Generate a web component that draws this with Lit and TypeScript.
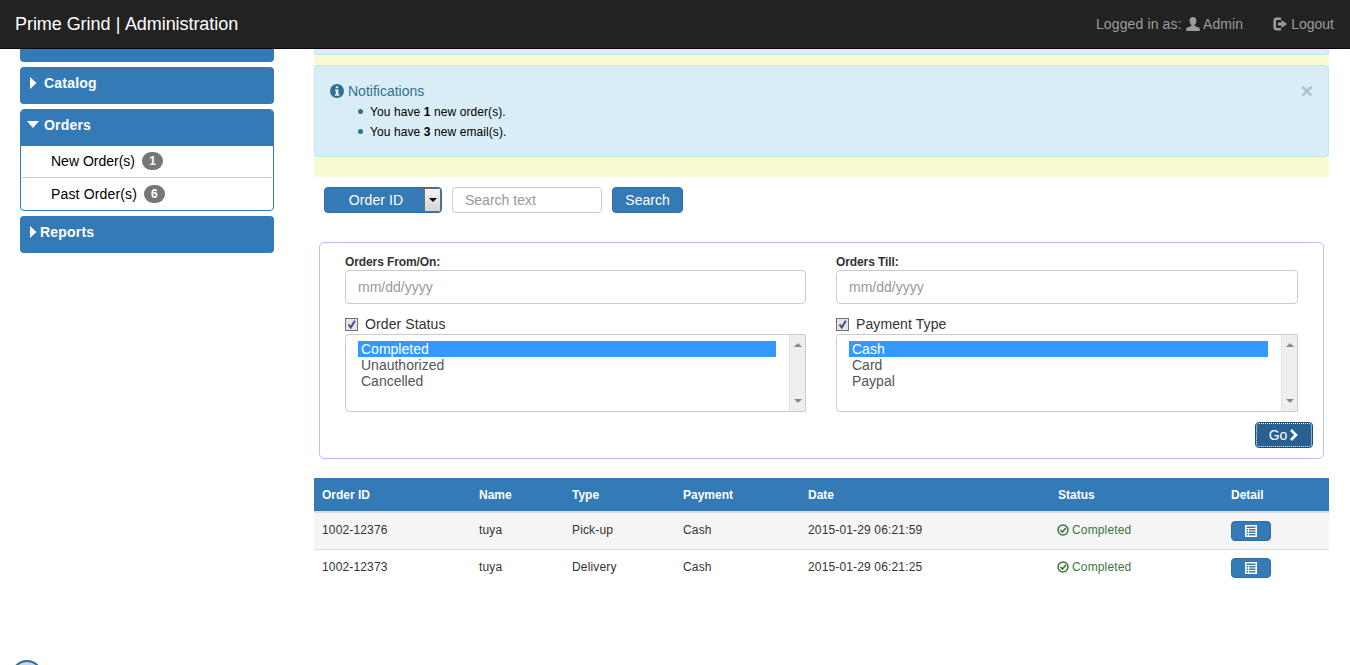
import { LitElement, html, css, svg } from "lit";
import { customElement } from "lit/decorators.js";

const triRight = html`<svg class="tri" viewBox="0 0 8 12" width="8" height="12"><path d="M0 0L6.5 6L0 12Z" fill="#fff"/></svg>`;
const triDown = html`<svg class="tridown" viewBox="0 0 12 8" width="12" height="8"><path d="M0 0H12L6 7Z" fill="#fff"/></svg>`;
const okCircle = html`<svg class="ok" viewBox="0 0 12 12" width="12" height="12"><circle cx="6" cy="6" r="5" fill="none" stroke="#3c763d" stroke-width="1.5"/><path d="M3.4 5.9L5.4 8L8.8 4" fill="none" stroke="#3c763d" stroke-width="1.6"/></svg>`;
const listAlt = html`<svg viewBox="0 0 14 14" width="14" height="14"><path fill="#fff" fill-rule="evenodd" d="M1 1H13V13H1ZM2.5 2.5V4H11.5V2.5ZM2.5 5V6.5H4V5ZM5 5V6.5H11.5V5ZM2.5 7.5V9H4V7.5ZM5 7.5V9H11.5V7.5ZM2.5 10V11.5H4V10ZM5 10V11.5H11.5V10Z"/></svg>`;
const scrollUp = svg`<path d="M3 5L7 1L11 5Z" fill="#8a8a8a"/>`;
const scrollDown = svg`<path d="M3 1L7 5L11 1Z" fill="#8a8a8a"/>`;

function listbox(items: string[]) {
  return html`<div class="listbox">
    <div class="options">
      ${items.map((t, i) => html`<div class="opt ${i === 0 ? "sel" : ""}">${t}</div>`)}
    </div>
    <div class="scroll">
      <svg viewBox="0 0 14 6" width="14" height="6">${scrollUp}</svg>
      <svg viewBox="0 0 14 6" width="14" height="6">${scrollDown}</svg>
    </div>
  </div>`;
}

const check = html`<span class="cb"><svg viewBox="0 0 11 11" width="11" height="11"><path d="M2.5 5.5L4.8 8.5L8.8 1.8" fill="none" stroke="#3d4f9e" stroke-width="2"/></svg></span>`;

const rows = [
  ["1002-12376", "tuya", "Pick-up", "Cash", "2015-01-29 06:21:59"],
  ["1002-12373", "tuya", "Delivery", "Cash", "2015-01-29 06:21:25"],
];

@customElement("app-root")
export class AppRoot extends LitElement {
  static styles = css`
    :host { display: block; height: 665px; overflow: hidden; position: relative; font-family: "Liberation Sans", Arial, sans-serif; font-size: 14px; color: #333; background: #fff; }
    * { box-sizing: border-box; }
    .nav { height: 49px; background: #222; border-bottom: 1px solid #080808; display: flex; align-items: center; justify-content: space-between; padding: 0 16px 0 15px; }
    .brand { font-size: 18px; color: #fff; letter-spacing: -0.06px; }
    .brand .bar { margin: 0 .5px; }
    .navr { display: flex; color: #9d9d9d; font-size: 14px; align-items: center; }
    .navr svg { vertical-align: -2px; }
    .logged { letter-spacing: .13px; }
    .logout { margin-left: 30px; }
    .body { display: flex; align-items: flex-start; }
    .side { width: 254px; margin-left: 20px; display: flex; flex-direction: column; gap: 5px; }
    .panel { background: #337ab7; border-radius: 4px; height: 37px; color: #fff; font-weight: bold; display: flex; align-items: center; gap: 6px; padding: 0 0 6px 10px; font-size: 14px; letter-spacing: .2px; }
    .stub { height: 13px; border-radius: 0 0 4px 4px; padding: 0; }
    .reports { gap: 2px; }
    .orders { border: 1px solid #337ab7; border-radius: 4px; height: 102px; overflow: hidden; }
    .orders .panel { margin: -1px -1px 0; border-radius: 4px 4px 0 0; padding-left: 7px; gap: 5px; }
    .orders .item { height: 31px; padding: 0 0 2px 30px; display: flex; align-items: center; color: #000; font-size: 14px; }
    .orders .past { height: 34px; border-top: 1px solid #ccc; letter-spacing: .15px; margin: 0 1px; padding-left: 29px; }
    .badge { background: #777; color: #fff; font-size: 12px; font-weight: bold; border-radius: 10px; width: 21px; height: 18px; margin-left: 7px; display: flex; align-items: center; justify-content: center; }
    .main { width: 1015px; margin-left: 40px; }
    .yellow { background: #fafad2; height: 128px; padding-bottom: 20px; display: flex; flex-direction: column; }
    .alertstub { height: 6px; background: #d9edf7; border: 1px solid #bce8f1; border-top: 0; border-radius: 0 0 4px 4px; }
    .alert { margin-top: 10px; height: 92px; background: #d9edf7; border: 1px solid #bce8f1; border-radius: 4px; padding: 15px; position: relative; }
    .alert .title { color: #31708f; font-size: 14px; display: flex; align-items: center; gap: 4px; line-height: 20px; }
    .alert ul { margin: 1px 0 0; padding: 0 0 0 40px; color: #000; font-size: 12px; list-style: none; letter-spacing: .09px; }
    .alert li { height: 20px; line-height: 20px; position: relative; }
    .alert li::before { content: ""; position: absolute; left: -12px; top: 7px; width: 5px; height: 5px; border-radius: 50%; background: #31708f; }
    .close { position: absolute; right: 15px; top: 15px; font-size: 21px; line-height: 20px; font-weight: bold; color: #000; opacity: .2; }
    .search { display: flex; margin: 10px 0 0 10px; height: 26px; align-items: stretch; }
    .sel-btn { width: 118px; background: #337ab7; border: 1px solid #2e6da4; border-radius: 4px; color: #fff; display: flex; font-size: 14px; overflow: hidden; }
    .sel-btn span { flex: 1; display: flex; align-items: center; justify-content: center; padding-left: 3px; letter-spacing: .1px; }
    .sel-btn i { width: 17px; background: linear-gradient(#f4f4f4, #d4d4d4); border: 1px solid #707070; display: flex; align-items: center; justify-content: center; }
    .sel-btn i::after { content: ""; border: 4px solid transparent; border-top-color: #000; border-bottom: 0; }
    .stext { margin-left: 10px; width: 150px; border: 1px solid #ccc; border-radius: 4px; padding-left: 12px; display: flex; align-items: center; color: #999; font-size: 14px; }
    .sbtn { margin-left: 10px; width: 71px; background: #337ab7; border: 1px solid #2e6da4; border-radius: 4px; color: #fff; display: flex; align-items: center; justify-content: center; font-size: 14px; }
    .filter { margin: 29px 5px 0; height: 217px; border: 1px solid #b0c4f8; border-radius: 5px; padding: 10px 25px 0; position: relative; }
    .cols { display: grid; grid-template-columns: 461px 462px; column-gap: 30px; }
    .lbl { font-size: 12px; font-weight: bold; line-height: 17px; color: #333; letter-spacing: -.1px; padding-top: 1px; height: 17px; }
    .input { height: 34px; border: 1px solid #ccc; border-radius: 4px; padding-left: 12px; display: flex; align-items: center; color: #999; font-size: 14px; }
    .chk { display: flex; align-items: center; height: 20px; margin-top: 10px; gap: 7px; font-size: 14px; letter-spacing: .1px; }
    .cb { width: 13px; height: 13px; border: 1px solid #707070; background: #e4e4e4; display: flex; align-items: center; justify-content: center; }
    .listbox { height: 78px; border: 1px solid #ccc; border-radius: 4px 0 0 4px; display: flex; justify-content: space-between; }
    .options { padding: 6px 13px 0 12px; flex: 1; }
    .opt { height: 16px; line-height: 16px; padding-left: 3px; font-size: 14px; color: #555; }
    .opt.sel { background: #3399ff; color: #fff; }
    .scroll { width: 16px; background: #eee; border-left: 1px solid #e4e4e4; display: flex; flex-direction: column; justify-content: space-between; padding: 7px 0; align-items: center; }
    .go { position: absolute; right: 10px; bottom: 10px; width: 58px; height: 26px; background: #286090; border: 1px solid #204d74; border-radius: 4px; color: #fff; font-size: 14px; display: flex; align-items: center; justify-content: center; gap: 2px; outline: 1px dotted #fff; outline-offset: -2px; }
    .table { margin-top: 19px; font-size: 12px; }
    .tr { display: grid; grid-template-columns: 157px 93px 111px 125px 250px 173px 106px; align-items: center; }
    .tr > div { padding-left: 8px; }
    .th { background: #337ab7; color: #fff; font-weight: bold; height: 33px; }
    .td { height: 37px; border-top: 1px solid #ddd; color: #333; letter-spacing: .15px; }
    .td.first { border-top: 2px solid #ddd; height: 38px; background: #f5f5f5; }
    .tr > .cell { padding-bottom: 3px; }
    .tr > .status { color: #3c763d; display: flex; align-items: center; gap: 3px; padding-left: 7px; }
    .dbtn { width: 40px; height: 20px; background: #337ab7; border: 1px solid #2e6da4; border-radius: 4px; display: flex; align-items: center; justify-content: center; }
    .logo { position: absolute; left: 11px; top: 660px; }
  `;

  render() {
    return html`
      <div class="nav">
        <div class="brand">Prime Grind <span class="bar">|</span> Administration</div>
        <div class="navr">
          <span class="logged">Logged in as:
            <svg viewBox="0 0 14 14" width="14" height="14"><path fill="#9d9d9d" d="M7 0C4.8 0 3.6 1.6 3.6 3.7C3.6 5.4 4.4 7 5.3 7.8V9L0.3 11V14H13.7V11L8.7 9V7.8C9.6 7 10.4 5.4 10.4 3.7C10.4 1.6 9.2 0 7 0Z"/></svg>
            Admin</span>
          <span class="logout">
            <svg viewBox="0 0 14 14" width="14" height="14"><path fill="#9d9d9d" d="M0.5 3.5C0.5 1.8 1.8 0.5 3.5 0.5H8V3H4C3.4 3 3 3.4 3 4V10C3 10.6 3.4 11 4 11H8V13.5H3.5C1.8 13.5 0.5 12.2 0.5 10.5ZM8.5 3L14 7L8.5 11V8.5H5V5.5H8.5Z"/></svg>
            Logout</span>
        </div>
      </div>
      <div class="body">
        <div class="side">
          <div class="panel stub"></div>
          <div class="panel">${triRight}<span>Catalog</span></div>
          <div class="orders">
            <div class="panel">${triDown}<span>Orders</span></div>
            <div class="item">New Order(s)<span class="badge">1</span></div>
            <div class="item past">Past Order(s)<span class="badge">6</span></div>
          </div>
          <div class="panel reports">${triRight}<span>Reports</span></div>
        </div>
        <div class="main">
          <div class="yellow">
            <div class="alertstub"></div>
            <div class="alert">
              <div class="close">×</div>
              <div class="title">
                <svg viewBox="0 0 14 14" width="14" height="14"><path fill="#31708f" fill-rule="evenodd" d="M7 0A7 7 0 1 0 7 14A7 7 0 1 0 7 0ZM5.8 2.2H8.2V4.2H5.8ZM5 5.5H8.4V10.2H9.4V11.8H4.8V10.2H5.8V7H5Z"/></svg>
                Notifications
              </div>
              <ul>
                <li>You have <b>1</b> new order(s).</li>
                <li>You have <b>3</b> new email(s).</li>
              </ul>
            </div>
          </div>
          <div class="search">
            <div class="sel-btn"><span>Order ID</span><i></i></div>
            <div class="stext">Search text</div>
            <div class="sbtn">Search</div>
          </div>
          <div class="filter">
            <div class="cols">
              <div>
                <div class="lbl">Orders From/On:</div>
                <div class="input">mm/dd/yyyy</div>
                <div class="chk">${check}Order Status</div>
                ${listbox(["Completed", "Unauthorized", "Cancelled"])}
              </div>
              <div>
                <div class="lbl">Orders Till:</div>
                <div class="input">mm/dd/yyyy</div>
                <div class="chk">${check}Payment Type</div>
                ${listbox(["Cash", "Card", "Paypal"])}
              </div>
            </div>
            <div class="go">Go<svg viewBox="0 0 10 12" width="10" height="12"><path d="M2 1L7 6L2 11" fill="none" stroke="#fff" stroke-width="2.6"/></svg></div>
          </div>
          <div class="table">
            <div class="tr th"><div>Order ID</div><div>Name</div><div>Type</div><div>Payment</div><div>Date</div><div>Status</div><div>Detail</div></div>
            ${rows.map((r, i) => html`<div class="tr td ${i === 0 ? "first" : ""}">
              ${r.map((c) => html`<div class="cell">${c}</div>`)}
              <div class="cell status">${okCircle}Completed</div>
              <div><div class="dbtn">${listAlt}</div></div>
            </div>`)}
          </div>
        </div>
      </div>
      <svg class="logo" viewBox="0 0 32 32" width="32" height="32"><circle cx="16" cy="16" r="15" fill="#c9d9e8" stroke="#2e6da4" stroke-width="2"/></svg>
    `;
  }
}
